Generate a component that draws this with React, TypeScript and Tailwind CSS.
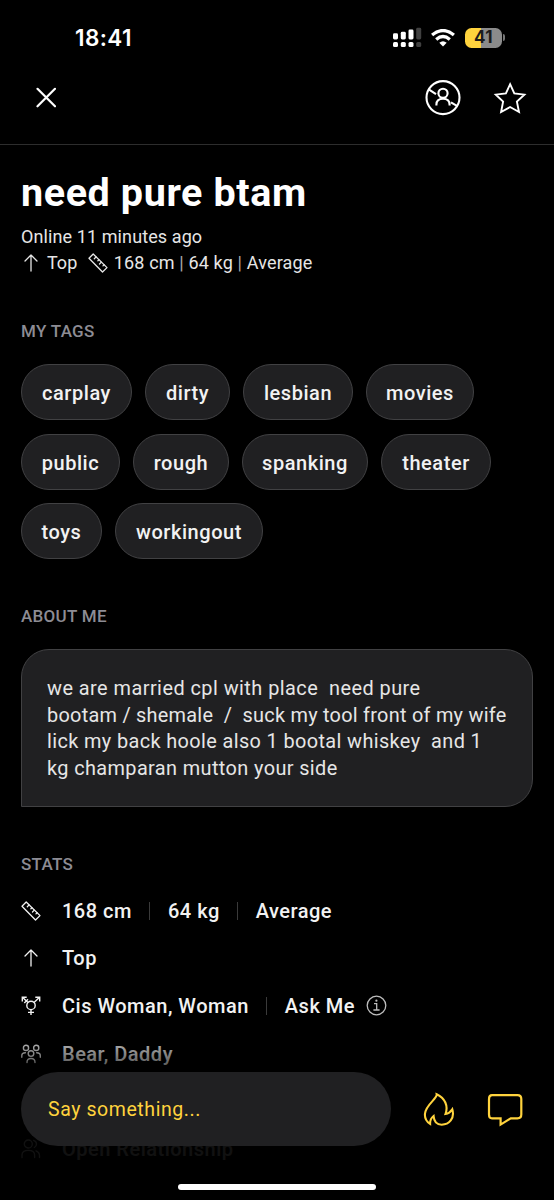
import type { ReactNode } from 'react'

const TAGS = [
  { label: 'carplay', width: 'w-[111px]' },
  { label: 'dirty', width: 'w-[85px]' },
  { label: 'lesbian', width: 'w-[110px]' },
  { label: 'movies', width: 'w-[108px]' },
  { label: 'public', width: 'w-[99px]' },
  { label: 'rough', width: 'w-[96px]' },
  { label: 'spanking', width: 'w-[126px]' },
  { label: 'theater', width: 'w-[110px]' },
  { label: 'toys', width: 'w-[81px]' },
  { label: 'workingout', width: 'w-[148px]' },
]

const BIO = [
  { text: 'we are married cpl with place  need pure', tracking: 'tracking-[0.46px]' },
  { text: 'bootam / shemale  /  suck my tool front of my wife', tracking: 'tracking-[0.26px]' },
  { text: 'lick my back hoole also 1 bootal whiskey  and 1', tracking: 'tracking-[0.38px]' },
  { text: 'kg champaran mutton your side', tracking: 'tracking-[0.39px]' },
]

function RulerIcon() {
  return (
    <svg width="20" height="20" viewBox="0 0 20 20" fill="none" stroke="currentColor" strokeWidth="1.3" strokeLinejoin="round" strokeLinecap="round" className="shrink-0">
      <path d="M5.2 1 L19 14.6 L14.5 19 L1 5.2 Z" />
      <path d="M8.1 3.9 L6.3 5.8 M10.9 6.7 L9.9 7.7 M13.3 9.1 L11.5 11 M16.1 11.8 L15 12.9" />
    </svg>
  )
}

function ArrowIcon() {
  return (
    <svg width="20" height="20" viewBox="0 0 20 20" fill="none" stroke="currentColor" strokeWidth="1.3" strokeLinecap="round" strokeLinejoin="round" className="shrink-0">
      <path d="M10 18 V2 M4 8 L10 2 L16 8" />
    </svg>
  )
}

function GenderIcon() {
  return (
    <svg width="20" height="20" viewBox="0 0 20 20" fill="none" stroke="currentColor" strokeWidth="1.4" className="shrink-0">
      <circle cx="10" cy="9.4" r="4.2" />
      <path d="M10 13.6 V19 M7 16.4 H13 M13 6.4 L18.3 1.4 M14.3 1.2 H18.7 V5.5 M7 6.4 L1.7 1.4 M1.3 5.5 V1.2 H5.7 M3.3 7 L7 3.3" />
    </svg>
  )
}

function TribeIcon() {
  return (
    <svg width="20" height="20" viewBox="0 0 20 20" fill="none" stroke="currentColor" strokeWidth="1.4" strokeLinecap="round" className="shrink-0">
      <circle cx="5" cy="3.9" r="2.6" />
      <circle cx="15.2" cy="3.9" r="2.6" />
      <circle cx="10" cy="9.6" r="2.8" />
      <path d="M.8 13.3 V11.8 Q.8 8.8 4.4 8.8 M19.3 13.3 V11.8 Q19.3 8.8 15.7 8.8 M6 18.6 Q5.9 14.5 10 14.5 Q14.1 14.5 14 18.6" />
    </svg>
  )
}

function PeopleIcon() {
  return (
    <svg width="20" height="20" viewBox="0 0 20 20" fill="none" stroke="currentColor" strokeWidth="1.3" strokeLinecap="round" className="shrink-0">
      <circle cx="7.3" cy="5" r="4" />
      <path d="M1 18.5 V16 Q1 11.3 7.3 11.3 Q13.6 11.3 13.6 16 V18.5 M12.5 1.3 Q15.5 2.2 15.5 5 Q15.5 7.5 13.3 8.5 M15 11.8 Q18.5 13.2 18.5 16.5 V18.5" />
    </svg>
  )
}

function InfoIcon() {
  return (
    <svg width="21" height="21" viewBox="0 0 21 21" fill="none" stroke="#bdbdbd" strokeWidth="1.3" className="shrink-0">
      <circle cx="10.5" cy="10.5" r="9.3" />
      <path d="M8 8.7 H10.7 V15 M7.4 15 H13.6" />
      <circle cx="10.4" cy="5.7" r="1.1" fill="#bdbdbd" stroke="none" />
    </svg>
  )
}

function StatusBar() {
  return (
    <div className="flex h-[74px] items-center pl-[75px] pr-[49px] pt-px">
      <span className="font-['Inter',sans-serif] text-[22.5px] font-semibold tracking-[0.4px] text-white">18:41</span>
      <svg width="29" height="21" viewBox="0 0 29 21" fill="#fff" className="ml-auto">
        <rect x="0" y="6.2" width="5" height="6.3" rx="1.4" />
        <rect x="7.8" y="4.8" width="5" height="7.7" rx="1.4" />
        <rect x="15.5" y="2.5" width="5" height="10" rx="1.4" />
        <rect x="23.2" y="0.8" width="5" height="11.7" rx="1.4" fill="#404040" />
        <rect x="0" y="15" width="5" height="5" rx="1.5" />
        <rect x="7.8" y="15" width="5" height="5" rx="1.5" />
        <rect x="15.5" y="15" width="5" height="5" rx="1.5" />
        <rect x="23.2" y="15" width="5" height="5" rx="1.5" fill="#404040" />
      </svg>
      <svg width="24" height="18" viewBox="0 0 24 18" fill="none" stroke="#fff" strokeWidth="3.3" className="ml-[9px]">
        <path d="M1.1 6.1 Q12 -3 22.9 6.1" />
        <path d="M5.2 10.4 Q12 4.6 18.8 10.4" />
        <path d="M8.3 13.8 Q12 10.7 15.7 13.8 L12 17.5 Z" fill="#fff" stroke="none" />
      </svg>
      <div className="ml-2.5 flex items-center gap-[1px]">
        <div className="flex h-[20px] w-[37px] items-center justify-center rounded-[6.5px] bg-[linear-gradient(to_right,#ffd33d_42%,#8b8b8b_42%)] pt-px font-['Inter',sans-serif] text-[17px] font-bold tracking-[0.3px] text-[#1c1c1c]">
          41
        </div>
        <div className="h-[7px] w-[2px] rounded-r-full bg-[#777]" />
      </div>
    </div>
  )
}

function Header() {
  return (
    <div className="flex h-[71px] items-start border-b border-[#2d2d2d] pl-9 pr-[27px] pt-1.5">
      <svg width="20" height="36" viewBox="0 0 20 36" fill="none" stroke="#fff" strokeWidth="2.2" strokeLinecap="round">
        <path d="M1.5 8.8 L19 26.3 M19 8.8 L1.5 26.3" />
      </svg>
      <svg width="36" height="36" viewBox="0 0 36 36" fill="none" stroke="#fff" strokeWidth="2.1" className="ml-auto">
        <circle cx="18" cy="17.6" r="16.5" />
        <circle cx="18" cy="13.3" r="4.6" />
        <path d="M11.4 25.6 V24.7 Q11.4 18.8 18 18.8 Q24.6 18.8 24.6 24.7 V25.6" />
        <path d="M3.7 9.4 L11 14.2 M26 22.4 L32.3 26.2" />
      </svg>
      <svg width="34" height="36" viewBox="0 0 34 36" fill="none" stroke="#fff" strokeWidth="1.9" strokeLinejoin="miter" className="ml-8">
        <path d="M17.1 4.2 L21.3 13.4 L31.4 14.6 L23.9 21.6 L26 32 L17.1 27 L8.1 32 L10.1 21.6 L2.8 14.6 L12.9 13.4 Z" />
      </svg>
    </div>
  )
}

function SectionTitle({ children }: { children: ReactNode }) {
  return <h2 className="h-6 text-[17px] font-medium leading-[23px] tracking-[0.3px] text-[#8d8c94]">{children}</h2>
}

function StatRow({ icon, children }: { icon: ReactNode; children: ReactNode }) {
  return (
    <div className="flex h-[47.6px] items-center text-[20px] font-medium tracking-[0.5px]">
      {icon}
      <div className="ml-[21px] flex items-center whitespace-nowrap">{children}</div>
    </div>
  )
}

function Divider() {
  return <span className="mx-[17.5px] h-[18px] w-px bg-[#3a3a3a]" />
}

function MessageBar() {
  return (
    <div className="absolute inset-x-0 bottom-0 flex h-[175px] flex-col bg-[linear-gradient(to_bottom,transparent,rgba(0,0,0,0.93)_60px)] px-[21px] pt-[46.5px]">
      <div className="flex items-center">
        <div className="flex h-[74px] w-[370px] shrink-0 items-center rounded-full bg-[#202022] pl-[27px] pt-[3px] text-[19.5px] tracking-[0.58px] text-[#ffd33d]">
          Say something...
        </div>
        <svg width="32" height="36" viewBox="0 0 32 36" fill="none" stroke="#ffd33d" strokeWidth="2.1" strokeLinejoin="miter" className="ml-8 mt-0.5">
          <path d="M13.7 2.2 C14.5 6.5 3 12.5 2 21.5 C1.5 26 3.5 29.5 7.1 31.8 C7 28.5 8 26 10.6 24 C11 29.5 14 32.7 18.7 32.7 C26 32.7 32 26.5 29.3 17.3 C27.5 20 25.7 21.5 22.5 22 C25.5 14 22 6 13.7 2.2 Z" />
        </svg>
        <svg width="36" height="36" viewBox="0 0 36 36" fill="none" stroke="#ffd33d" strokeWidth="2.2" className="ml-[31.5px] mt-0.5">
          <path d="M5 3.2 H30.5 Q34.3 3.2 34.3 7 V22.5 Q34.3 26.3 30.5 26.3 H23.8 L13.6 32.6 V26.3 H5 Q2 26.3 2 22.5 V7 Q2 3.2 5 3.2 Z" />
        </svg>
      </div>
      <div className="mb-[10px] mt-auto h-[6.5px] w-[198px] self-center rounded-full bg-white" />
    </div>
  )
}

export default function App() {
  return (
    <div className="relative flex h-[1200px] w-[554px] flex-col overflow-hidden bg-black font-['Roboto','Noto_Sans',sans-serif] text-[#f2f2f2]">
      <StatusBar />
      <Header />

      <main className="flex flex-col px-[21px]">
        <h1 className="mt-[23px] h-[50px] text-[39.5px] font-bold leading-[50px] tracking-[0.6px] text-white">need pure btam</h1>
        <p className="mt-[6px] h-[26.5px] text-[18px] leading-[26.5px] tracking-[0.1px] text-[#e6e6e6]">Online 11 minutes ago</p>
        <div className="-mt-px mb-px flex h-[26.5px] items-center text-[18px] leading-[26.5px] text-[#e6e6e6]">
          <ArrowIcon />
          <span className="ml-1.5">Top</span>
          <span className="ml-[11px] flex"><RulerIcon /></span>
          <span className="ml-[5.5px] tracking-[0.15px]">168 cm <span className="text-[#aaa]">|</span> 64 kg <span className="text-[#aaa]">|</span> Average</span>
        </div>

        <div className="mt-[43px]"><SectionTitle>MY TAGS</SectionTitle></div>
        <div className="mt-5 flex flex-wrap gap-x-[13px] gap-y-[13.5px]">
          {TAGS.map(tag => (
            <span key={tag.label} className={`flex h-14 items-center justify-center rounded-full border border-[#414143] bg-[#202022] pt-0.5 text-[20px] font-medium tracking-[0.55px] ${tag.width}`}>
              {tag.label}
            </span>
          ))}
        </div>

        <div className="mt-[46px]"><SectionTitle>ABOUT ME</SectionTitle></div>
        <div className="mt-5 h-[158px] rounded-[28px] rounded-bl-none border border-[#414143] bg-[#202022] pl-[25px] pt-[26px] text-[19.9px] leading-[26.7px] text-[#e6e6e6]">
          {BIO.map(line => <p key={line.text} className={`whitespace-pre ${line.tracking}`}>{line.text}</p>)}
        </div>

        <div className="mt-[46px]"><SectionTitle>STATS</SectionTitle></div>
        <div className="mt-2.5 flex flex-col">
          <StatRow icon={<RulerIcon />}>168 cm<Divider />64 kg<Divider />Average</StatRow>
          <StatRow icon={<ArrowIcon />}>Top</StatRow>
          <StatRow icon={<GenderIcon />}>
            Cis Woman, Woman<Divider />Ask Me
            <span className="ml-[11px]"><InfoIcon /></span>
          </StatRow>
          <StatRow icon={<TribeIcon />}>Bear, Daddy</StatRow>
          <div className="mt-[47.6px]">
            <StatRow icon={<PeopleIcon />}>Open Relationship</StatRow>
          </div>
        </div>
      </main>

      <MessageBar />
    </div>
  )
}
